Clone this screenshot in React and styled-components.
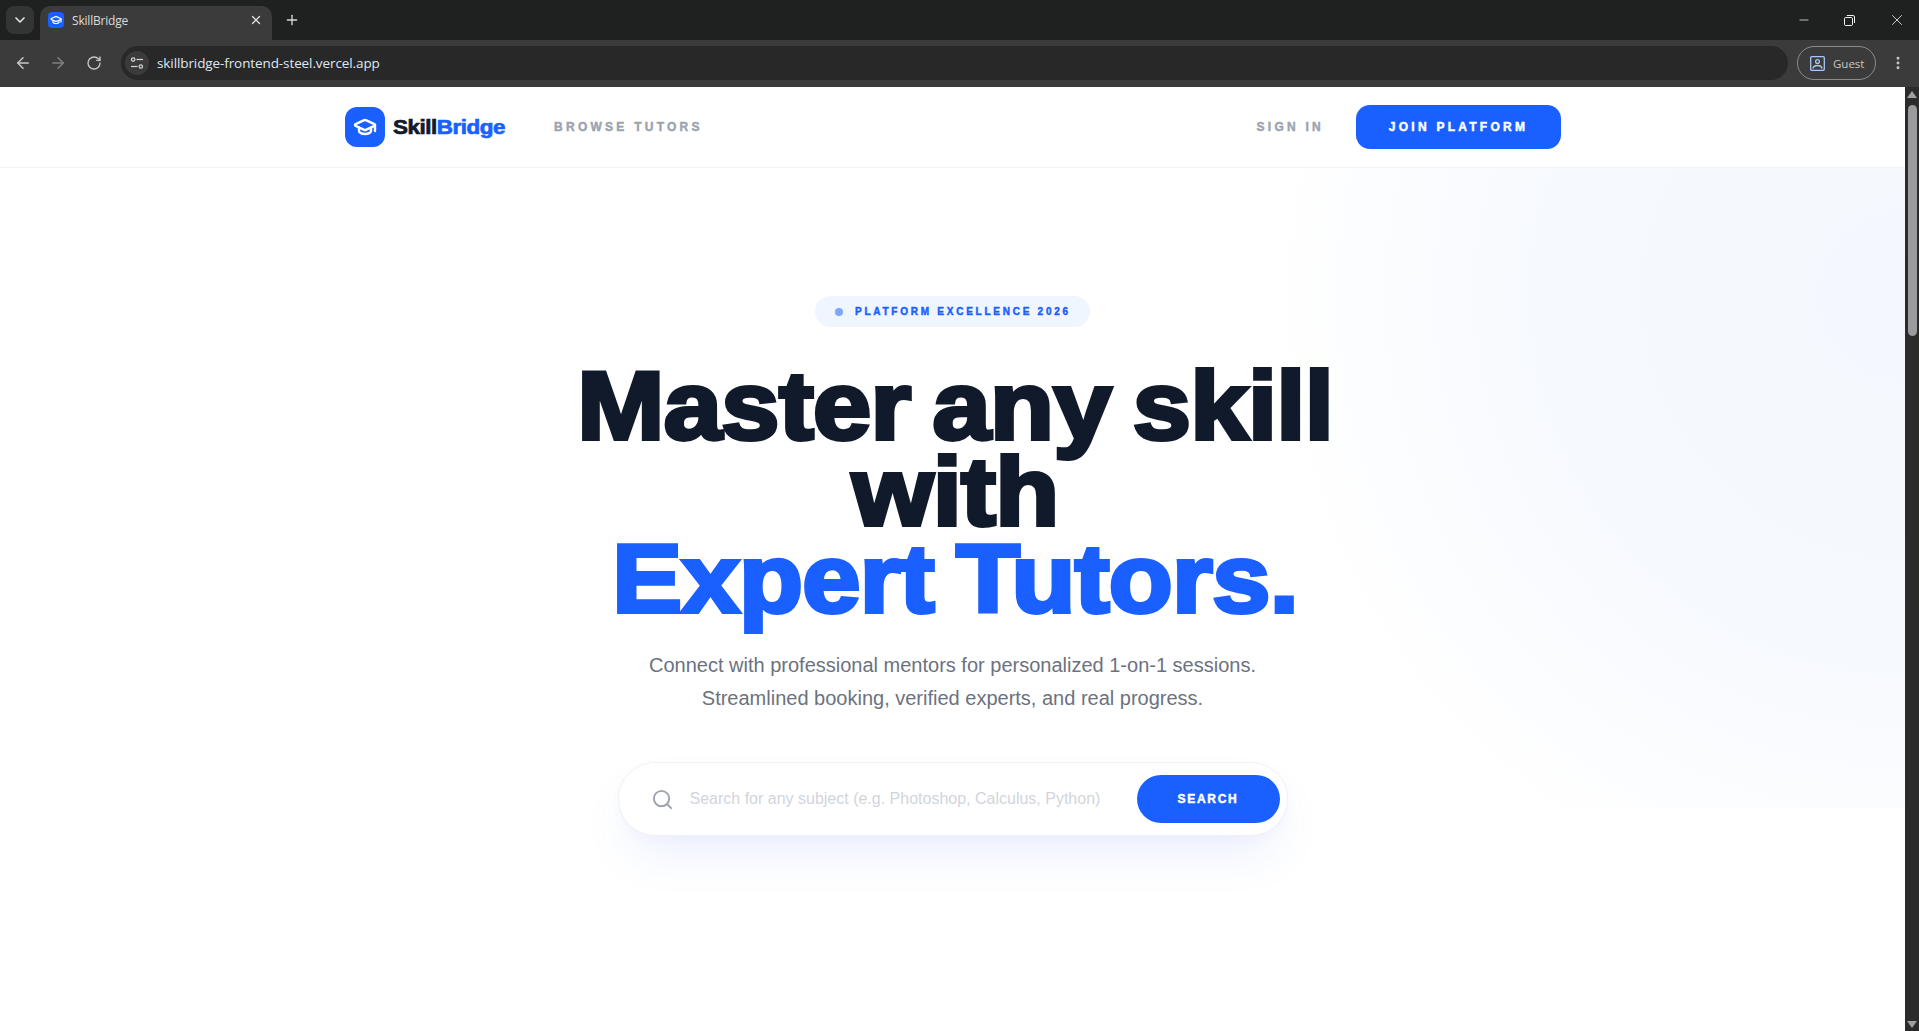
import React from 'react';
import styled, { createGlobalStyle } from 'styled-components';
import { ArrowLeft, ArrowRight, ChevronDown, EllipsisVertical, GraduationCap, Minus, Plus, RotateCw, Search, X } from 'lucide-react';

const Global = createGlobalStyle`
  html, body { margin: 0; padding: 0; height: 100%; overflow: hidden; background: #fff; }
  #root { height: 100%; }
  * { box-sizing: border-box; }
`;

const Window = styled.div`
  display: flex; flex-direction: column; height: 1031px; width: 1919px;
  font-family: "Liberation Sans", Arial, sans-serif;
`;
const TabStrip = styled.div`
  display: flex; align-items: flex-end; height: 40px; background: #1f2120; color: #e3e3e3; padding-left: 6px;
`;
const TabList = styled.button`
  display: flex; align-items: center; justify-content: center; width: 28px; height: 28px; margin-bottom: 6px;
  border: 0; border-radius: 8px; background: #333534; color: #e3e3e3; padding: 0;
`;
const Tab = styled.div`
  display: flex; align-items: center; width: 232px; height: 34px; margin-left: 6px; padding: 0 9px 6px 8px;
  background: #3b3b3b; border-radius: 10px 10px 0 0;
  font-family: "Open Sans", sans-serif; font-size: 12px; color: #dcdcdc;
`;
const Favicon = styled.span`
  display: flex; align-items: center; justify-content: center; width: 16px; height: 16px;
  background: #1a5fff; border-radius: 4px; color: #fff; margin-right: 8px;
`;
const TabTitle = styled.span` flex: 1; letter-spacing: -0.2px; `;
const NewTab = styled.span` display: flex; margin: 0 0 12px 12px; color: #d8d8d8; `;
const WindowControls = styled.div`
  display: flex; margin-left: auto; height: 40px; align-items: center; padding-right: 13px; gap: 33px; color: #f0f0f0;
`;
const Toolbar = styled.div`
  display: flex; align-items: center; height: 47px; background: #3b3b3b; padding: 0 13px 1px 14px; color: #c7c7c7;
`;
const NavIcon = styled.span`
  display: flex; width: 18px; margin-right: ${p => p.$gap}px; color: ${p => p.$dim ? '#7e8083' : '#c7c7c7'};
`;
const Omnibox = styled.div`
  display: flex; align-items: center; flex: 1; height: 34px; border-radius: 17px; background: #282828; padding-left: 4px;
  font-family: "Open Sans", sans-serif; font-size: 13.5px; color: #dfe7f5; letter-spacing: -0.1px;
`;
const SiteInfo = styled.span`
  display: flex; align-items: center; justify-content: center; width: 24px; height: 24px; border-radius: 50%;
  background: #3b3b3b; margin-right: 8px;
`;
const GuestPill = styled.div`
  display: flex; align-items: center; gap: 8px; width: 79px; height: 34px; margin: 0 14px 0 9px; padding-left: 12px;
  border: 1px solid #8b8b8e; border-radius: 17px;
  font-family: "Open Sans", sans-serif; font-size: 11.5px; color: #c7c7c7;
`;
const Viewport = styled.div` display: flex; flex: 1; min-height: 0; `;
const Page = styled.main` position: relative; flex: 1; min-width: 0; overflow: hidden; background: #fff; `;
const Scrollbar = styled.div`
  display: flex; flex-direction: column; align-items: center; width: 14px; background: #2b2b2b; padding: 4px 0 3px; 
`;
const ScrollThumb = styled.div` width: 9px; height: 231px; margin-top: 7px; margin-bottom: auto; border-radius: 5px; background: #9b9b9e; `;
const ScrollArrow = styled.div`
  width: 0; height: 0; border-left: 5px solid transparent; border-right: 5px solid transparent;
  ${p => p.$down ? 'border-top: 7px solid #a0a0a3;' : 'border-bottom: 7px solid #a0a0a3;'}
`;

const Glow = styled.div`
  position: absolute; top: 81px; right: 0; width: 640px; height: 640px;
  background: radial-gradient(ellipse 100% 100% at 100% 20%, #f4f8fe 0%, #f6f9fe 55%, rgba(248,250,255,0) 100%);
`;
const NavBar = styled.header`
  position: relative; height: 81px; border-bottom: 1px solid #f3f4f6; background: #fff;
`;
const NavInner = styled.div`
  display: flex; align-items: center; width: 1216px; height: 80px; margin: 0 auto; position: relative; left: 0.5px;
`;
const LogoMark = styled.span`
  display: flex; align-items: center; justify-content: center; width: 40px; height: 40px;
  background: #1a5fff; border-radius: 12px; color: #fff;
`;
const LogoText = styled.span`
  margin-left: 8px; font-size: 20px; font-weight: 700; color: #111a2b; letter-spacing: -0.4px;
  -webkit-text-stroke: 0.7px currentColor; transform: scaleX(1.12); transform-origin: left center;
`;
const LogoAccent = styled.span` color: #1a5fff; `;
const NavLink = styled.a`
  font-size: 12px; font-weight: 700; letter-spacing: 3.25px; color: #9ca3af; -webkit-text-stroke: 0.45px currentColor;
  margin-left: ${p => p.$ml || 0}px;
`;
const JoinButton = styled.button`
  width: 205px; height: 44px; margin-left: 32px; border: 0; border-radius: 14px; background: #1a5fff; color: #fff;
  font-family: inherit; font-size: 12px; font-weight: 700; letter-spacing: 3.25px; -webkit-text-stroke: 0.45px currentColor;
`;
const Hero = styled.section`
  position: relative; display: flex; flex-direction: column; align-items: center; padding-top: 128px;
`;
const Badge = styled.div`
  display: flex; align-items: center; width: 275px; height: 31px; padding-left: 20px; border-radius: 16px; background: #eff6ff;
  color: #1a5fff; font-size: 10px; font-weight: 700; letter-spacing: 2.75px; -webkit-text-stroke: 0.45px currentColor;
`;
const BadgeDot = styled.span` width: 8px; height: 8px; margin-right: 12px; border-radius: 50%; background: #7ea6fb; `;
const Title = styled.h1`
  margin: 36px 0 0; text-align: center; font-size: 96px; line-height: 86.4px; font-weight: 700; color: #111a2b;
  letter-spacing: -0.6px; word-spacing: -6px; -webkit-text-stroke: 4px currentColor; transform: translateX(2.5px) scaleX(1.09);
`;
const TitleAccent = styled.span` display: block; color: #1a5fff; `;
const Lead = styled.p`
  margin: 27px 0 0; text-align: center; font-size: 20px; line-height: 33px; color: #6b7280;
`;
const SearchBar = styled.form`
  display: flex; align-items: center; width: 670px; height: 74px; margin-top: 47px; padding: 0 7px 0 32px;
  background: #fff; border: 1px solid #eff1f6; border-radius: 37px;
  box-shadow: 0 25px 50px -12px rgba(59,110,246,0.12), 0 4px 10px rgba(59,110,246,0.03);
`;
const SearchIcon = styled.span` display: flex; color: #9ca3af; margin-right: 16px; `;
const Placeholder = styled.span` flex: 1; font-size: 16px; color: #d1d5db; `;
const SearchButton = styled.button`
  width: 143px; height: 48px; border: 0; border-radius: 24px; background: #1a5fff; color: #fff;
  font-family: inherit; font-size: 12px; font-weight: 700; letter-spacing: 1.7px; -webkit-text-stroke: 0.45px currentColor;
`;

const Tune = () => (
  <svg width="14" height="14" viewBox="0 0 14 14" fill="none" stroke="#d6d6d6" strokeWidth="1.2">
    <circle cx="3.2" cy="3.5" r="1.7" /><path d="M6.5 3.5H13" />
    <circle cx="10.8" cy="10.5" r="1.7" /><path d="M1 10.5H7.5" />
  </svg>
);
const Restore = () => (
  <svg width="11" height="11" viewBox="0 0 11 11" fill="none" stroke="#f0f0f0" strokeWidth="1">
    <rect x="0.5" y="2.5" width="8" height="8" rx="1.2" /><path d="M2.8 0.5H9a1.5 1.5 0 0 1 1.5 1.5V8" />
  </svg>
);
const Avatar = () => (
  <svg width="15" height="15" viewBox="0 0 15 15" fill="none" stroke="#a8c7fa" strokeWidth="1.3">
    <rect x="0.7" y="0.7" width="13.6" height="13.6" rx="1" /><circle cx="7.5" cy="5.5" r="1.9" />
    <path d="M2.8 12.5c.6-2 2.4-3 4.7-3s4.100 1 4.700 3" />
  </svg>
);

export default function App() {
  return (
    <Window>
      <Global />
      <TabStrip>
        <TabList><ChevronDown size={16} strokeWidth={2.5} /></TabList>
        <Tab>
          <Favicon><GraduationCap size={12} strokeWidth={2.4} /></Favicon>
          <TabTitle>SkillBridge</TabTitle>
          <X size={14} strokeWidth={2.2} />
        </Tab>
        <NewTab><Plus size={16} strokeWidth={2} /></NewTab>
        <WindowControls>
          <Minus size={14} strokeWidth={1.3} />
          <Restore />
          <X size={18} strokeWidth={1.1} />
        </WindowControls>
      </TabStrip>
      <Toolbar>
        <NavIcon $gap={17}><ArrowLeft size={18} /></NavIcon>
        <NavIcon $gap={19} $dim><ArrowRight size={18} /></NavIcon>
        <NavIcon $gap={17}><RotateCw size={16} /></NavIcon>
        <Omnibox>
          <SiteInfo><Tune /></SiteInfo>
          skillbridge-frontend-steel.vercel.app
        </Omnibox>
        <GuestPill><Avatar />Guest</GuestPill>
        <EllipsisVertical size={16} strokeWidth={2.4} />
      </Toolbar>
      <Viewport>
        <Page>
          <Glow />
          <NavBar>
            <NavInner>
              <LogoMark><GraduationCap size={24} strokeWidth={2.4} /></LogoMark>
              <LogoText>Skill<LogoAccent>Bridge</LogoAccent></LogoText>
              <NavLink $ml={61}>BROWSE TUTORS</NavLink>
              <NavLink style={{ marginLeft: 'auto' }}>SIGN IN</NavLink>
              <JoinButton>JOIN PLATFORM</JoinButton>
            </NavInner>
          </NavBar>
          <Hero>
            <Badge><BadgeDot />PLATFORM EXCELLENCE 2026</Badge>
            <Title>Master any skill<br />with<TitleAccent>Expert Tutors.</TitleAccent></Title>
            <Lead>Connect with professional mentors for personalized 1-on-1 sessions.<br />Streamlined booking, verified experts, and real progress.</Lead>
            <SearchBar>
              <SearchIcon><Search size={23} strokeWidth={2} /></SearchIcon>
              <Placeholder>Search for any subject (e.g. Photoshop, Calculus, Python)</Placeholder>
              <SearchButton type="button">SEARCH</SearchButton>
            </SearchBar>
          </Hero>
        </Page>
        <Scrollbar>
          <ScrollArrow />
          <ScrollThumb />
          <ScrollArrow $down />
        </Scrollbar>
      </Viewport>
    </Window>
  );
}
